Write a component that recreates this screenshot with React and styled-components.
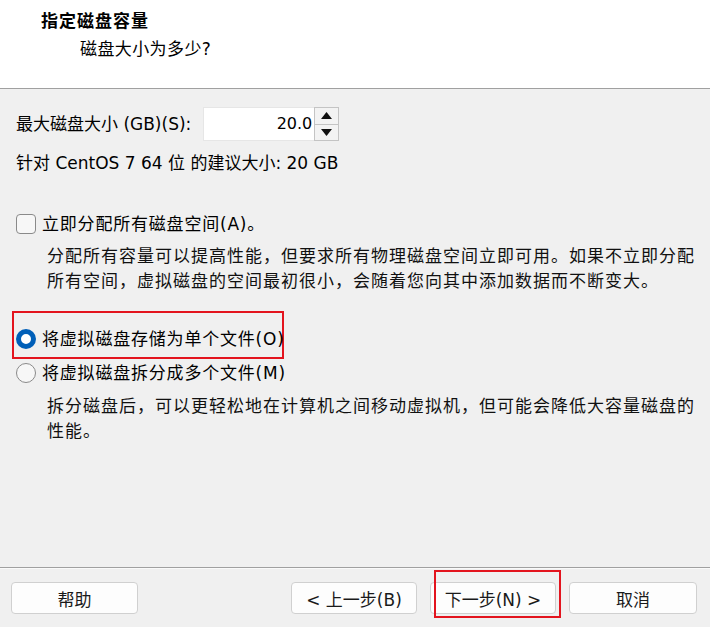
import React from 'react';
import styled, { createGlobalStyle } from 'styled-components';

const GlobalStyle = createGlobalStyle`
  html, body {
    margin: 0;
    padding: 0;
    background: #f0f0f0;
  }
  body {
    font-family: "DejaVu Sans", "Noto Sans CJK SC", sans-serif;
    color: #000;
  }
`;

export default function App() {
  return (
    <Window>
      <GlobalStyle />
      <Header>
        <Title>指定磁盘容量</Title>
        <Subtitle>磁盘大小为多少?</Subtitle>
      </Header>

      <Body>
        <SizeRow>
          <Label>最大磁盘大小 (GB)(S):</Label>
          <Spinner>
            <SpinInput>20.0</SpinInput>
            <SpinButtons>
              <SpinButton>
                <Arrow up />
              </SpinButton>
              <SpinButton>
                <Arrow />
              </SpinButton>
            </SpinButtons>
          </Spinner>
        </SizeRow>
        <Hint>针对 CentOS 7 64 位 的建议大小: 20 GB</Hint>

        <OptionRow gap={37}>
          <Checkbox />
          <OptionText>立即分配所有磁盘空间(A)。</OptionText>
        </OptionRow>
        <Description top={8}>
          分配所有容量可以提高性能，但要求所有物理磁盘空间立即可用。如果不立即分配
          <br />
          所有空间，虚拟磁盘的空间最初很小，会随着您向其中添加数据而不断变大。
        </Description>

        <Highlight>
          <OptionRow>
            <Radio checked />
            <OptionText>将虚拟磁盘存储为单个文件(O)</OptionText>
          </OptionRow>
        </Highlight>
        <OptionRow gap={2}>
          <Radio />
          <OptionText>将虚拟磁盘拆分成多个文件(M)</OptionText>
        </OptionRow>
        <Description top={9}>
          拆分磁盘后，可以更轻松地在计算机之间移动虚拟机，但可能会降低大容量磁盘的
          <br />
          性能。
        </Description>
      </Body>

      <Footer>
        <Button width={127}>帮助</Button>
        <Spacer />
        <Button width={126}>&lt; 上一步(B)</Button>
        <Button width={126} marked>
          下一步(N) &gt;
        </Button>
        <Button width={128}>取消</Button>
      </Footer>
    </Window>
  );
}

function Arrow({ up }) {
  return (
    <svg width="11" height="7" viewBox="0 0 11 7">
      {up ? <polygon points="0,7 11,7 5.5,0" fill="#111" /> : <polygon points="0,0 11,0 5.5,7" fill="#111" />}
    </svg>
  );
}

const Window = styled.div`
  width: 710px;
  height: 627px;
  display: flex;
  flex-direction: column;
  background: #f0f0f0;
  overflow: hidden;
`;

const Header = styled.div`
  height: 89px;
  box-sizing: border-box;
  background: #fff;
  border-bottom: 1px solid #a0a0a0;
  padding: 9px 0 0 41px;
  flex-shrink: 0;
`;

const Title = styled.div`
  font-size: 17px;
  font-weight: 700;
  line-height: 24px;
  letter-spacing: 1px;
`;

const Subtitle = styled.div`
  font-size: 17px;
  line-height: 24px;
  margin: 4px 0 0 39px;
  letter-spacing: 0.4px;
`;

const Body = styled.div`
  flex: 1;
  padding: 18px 0 0 16px;
  display: flex;
  flex-direction: column;
  align-items: flex-start;
`;

const SizeRow = styled.div`
  display: flex;
  align-items: center;
  gap: 12px;
  height: 34px;
`;

const Label = styled.div`
  font-size: 17px;
  line-height: 24px;
  white-space: pre;
`;

const Spinner = styled.div`
  display: flex;
  height: 34px;
`;

const SpinInput = styled.div`
  width: 111px;
  box-sizing: border-box;
  background: #fff;
  border: 1px solid #e6e6e6;
  border-right: none;
  text-align: right;
  padding-right: 2px;
  font-size: 16px;
  line-height: 32px;
`;

const SpinButtons = styled.div`
  width: 25px;
  box-sizing: border-box;
  border: 1px solid #c4c4c4;
  display: flex;
  flex-direction: column;
  background: #f3f3f3;
`;

const SpinButton = styled.div`
  flex: 1;
  display: flex;
  align-items: center;
  justify-content: center;
  & + & {
    border-top: 1px solid #c4c4c4;
  }
`;

const Hint = styled.div`
  font-size: 17px;
  line-height: 24px;
  margin-top: 10px;
  white-space: pre;
`;

const OptionRow = styled.div`
  display: flex;
  align-items: center;
  gap: 6px;
  height: 24px;
  margin-top: ${p => p.gap || 0}px;
`;

const OptionText = styled.div`
  font-size: 17px;
  line-height: 24px;
  letter-spacing: 0.8px;
  white-space: nowrap;
`;

const Checkbox = styled.div`
  width: 20px;
  height: 20px;
  box-sizing: border-box;
  border: 1px solid #8a8a8a;
  border-radius: 4px;
  background: #f7f7f7;
  flex-shrink: 0;
`;

const Radio = styled.div`
  width: 20px;
  height: 20px;
  box-sizing: border-box;
  border-radius: 50%;
  flex-shrink: 0;
  border: ${p => (p.checked ? '5px solid #005fb8' : '1px solid #8a8a8a')};
  background: ${p => (p.checked ? '#fff' : '#f7f7f7')};
`;

const Description = styled.div`
  font-size: 17px;
  line-height: 25px;
  letter-spacing: 1px;
  margin: ${p => p.top}px 0 0 31px;
  white-space: nowrap;
  color: #111;
`;

const Highlight = styled.div`
  margin: 17px 0 0 -4px;
  width: 272px;
  height: 48px;
  box-sizing: border-box;
  border: 2px solid #e3141e;
  padding: 14px 0 0 2px;
`;

const Footer = styled.div`
  height: 60px;
  box-sizing: border-box;
  border-top: 1px solid #a0a0a0;
  box-shadow: inset 0 1px 0 #fafafa;
  padding: 14px 13px 0 11px;
  display: flex;
  align-items: flex-start;
  gap: 13px;
  flex-shrink: 0;
`;

const Spacer = styled.div`
  flex: 1;
`;

const Button = styled.div`
  position: relative;
  width: ${p => p.width}px;
  height: 32px;
  box-sizing: border-box;
  background: #fdfdfd;
  border: 1px solid #d0d0d0;
  border-radius: 4px;
  display: flex;
  align-items: center;
  justify-content: center;
  font-size: 17px;
  color: #1a1a1a;
  white-space: pre;

  &::after {
    content: '';
    display: ${p => (p.marked ? 'block' : 'none')};
    position: absolute;
    left: 3px;
    top: -13px;
    width: 127px;
    height: 48px;
    box-sizing: border-box;
    border: 2px solid #e3141e;
  }
`;
